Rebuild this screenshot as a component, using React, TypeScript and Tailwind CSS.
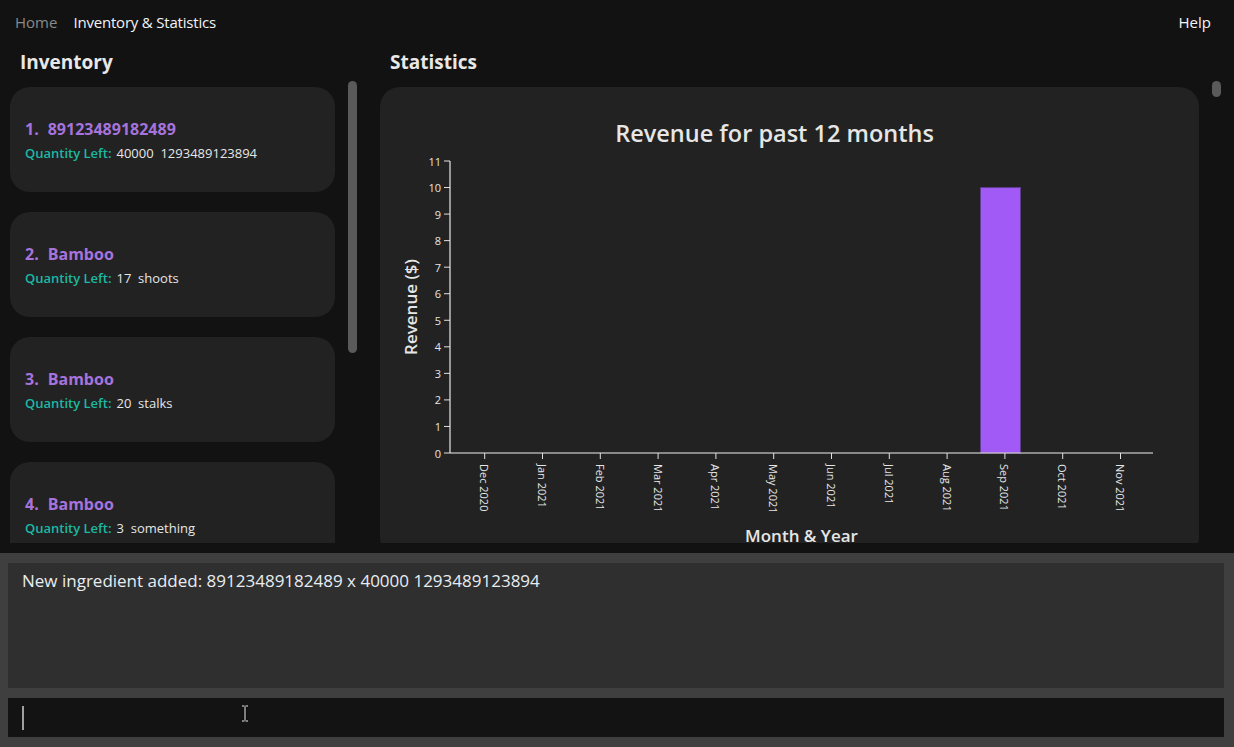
import React from "react";

const months = [
  "Dec 2020","Jan 2021","Feb 2021","Mar 2021","Apr 2021","May 2021",
  "Jun 2021","Jul 2021","Aug 2021","Sep 2021","Oct 2021","Nov 2021",
];

const items = [
  { n: 1, name: "89123489182489", qty: "40000  1293489123894" },
  { n: 2, name: "Bamboo", qty: "17  shoots" },
  { n: 3, name: "Bamboo", qty: "20  stalks" },
  { n: 4, name: "Bamboo", qty: "3  something" },
];

function Chart() {
  const x0 = 70, x1 = 773, y0 = 74, y1 = 366;
  const unit = (y1 - y0) / 11;
  const ticks = Array.from({ length: 12 }, (_, i) => i);
  return (
    <svg width="819" height="470" className="block" style={{ fontFamily: "'Open Sans', sans-serif" }}>
      <text x="394.5" y="55" textAnchor="middle" fill="#e6e6e6" fontSize="23.5" fontWeight="600">
        Revenue for past 12 months
      </text>
      {ticks.map((v) => {
        const y = y1 - v * unit;
        return (
          <g key={v}>
            <line x1={x0 - 6} x2={x0} y1={y} y2={y} stroke="#e0e0e0" strokeWidth="1" />
            <text x={x0 - 9} y={y} textAnchor="end" dominantBaseline="central" fill="#e6e6e6" fontSize="11">
              {v}
            </text>
          </g>
        );
      })}
      <line x1={x0} x2={x0} y1={y0} y2={y1} stroke="#e8e8e8" strokeWidth="1.2" />
      <rect x="600.5" y={y1 - 10 * unit} width="40" height={10 * unit} fill="#a25af6" stroke="#5e3d8c" strokeWidth="1" />
      <line x1={x0} x2={x1} y1={y1} y2={y1} stroke="#f0f0f0" strokeWidth="1.2" />
      {months.map((m, i) => {
        const x = 104.7 + 57.8 * i;
        return (
          <g key={m}>
            <line x1={x} x2={x} y1={y1} y2={y1 + 6} stroke="#e0e0e0" strokeWidth="1" />
            <text
              x={x}
              y={y1 + 11}
              transform={`rotate(90 ${x} ${y1 + 11})`}
              textAnchor="start"
              dominantBaseline="central"
              fill="#e6e6e6"
              fontSize="11"
            >
              {m}
            </text>
          </g>
        );
      })}
      <text
        x="30"
        y="220"
        transform="rotate(-90 30 220)"
        textAnchor="middle"
        dominantBaseline="central"
        fill="#e6e6e6"
        fontSize="17"
        fontWeight="600"
      >
        Revenue ($)
      </text>
      <text x="421.5" y="455" textAnchor="middle" fill="#e6e6e6" fontSize="17" fontWeight="600">
        Month &amp; Year
      </text>
    </svg>
  );
}

export default function App() {
  return (
    <div
      className="w-[1234px] h-[747px] bg-[#121212] flex flex-col overflow-hidden relative"
      style={{ fontFamily: "'Open Sans', 'Noto Sans', sans-serif" }}
    >
      {/* nav */}
      <div className="h-[44px] flex items-center pl-[15px] pr-[23px] text-[15px] shrink-0">
        <span className="text-[#8a8a8a]">Home</span>
        <span className="ml-[16px] text-[#f2f4f7] tracking-[-0.2px]">Inventory &amp; Statistics</span>
        <span className="ml-auto text-[#f2f4f7]">Help</span>
      </div>

      {/* main */}
      <div className="h-[499px] flex shrink-0 overflow-hidden">
        {/* left column */}
        <div className="w-[380px] flex flex-col shrink-0">
          <div className="h-[37px] flex items-center pl-[20px] text-[19px] font-bold text-[#e8e8e8]">
            Inventory
          </div>
          <div className="flex-1 flex pl-[10px] overflow-hidden">
            <div className="w-[325px] pt-[6px] flex flex-col gap-[20px] shrink-0">
              {items.map((it) => (
                <div
                  key={it.n}
                  className="h-[105px] shrink-0 rounded-[20px] bg-[#222222] flex flex-col justify-center px-[15px]"
                >
                  <div className="text-[16px] leading-[22px] font-bold text-[#a673dd]">
                    <span>{it.n}.</span>
                    <span className="ml-[9px]">{it.name}</span>
                  </div>
                  <div className="mt-[4px] text-[13px] leading-[18px]">
                    <span className="font-semibold text-[#1bb9a2]">Quantity Left:</span>
                    <span className="ml-[5px] text-[#e6e6e6] whitespace-pre">{it.qty}</span>
                  </div>
                </div>
              ))}
            </div>
            <div className="ml-[13px] w-[9px] h-[272px] rounded-full bg-[#5a5a5a] shrink-0" />
          </div>
        </div>

        {/* right column */}
        <div className="flex flex-col flex-1">
          <div className="h-[37px] flex items-center pl-[10px] text-[19px] font-bold text-[#e8e8e8]">
            Statistics
          </div>
          <div className="flex-1 flex overflow-hidden">
            <div className="mt-[6px] w-[819px] h-[470px] rounded-[20px] bg-[#222222] shrink-0 overflow-hidden">
              <Chart />
            </div>
            <div className="ml-[13px] w-[9px] h-[16px] rounded-full bg-[#5a5a5a] shrink-0" />
          </div>
        </div>
      </div>

      {/* bottom */}
      <div className="mt-[10px] flex-1 bg-[#3f3f3f] pl-[8px] pr-[10px] pt-[10px] flex flex-col">
        <div className="h-[125px] bg-[#2f2f2f] pl-[14px] pt-[6px] text-[17px] leading-[24px] text-[#e8edf2]">
          New ingredient added: 89123489182489 x 40000 1293489123894
        </div>
        <div className="mt-[10px] h-[39px] bg-[#131313] relative flex items-center pl-[14px]">
          <div className="w-[2px] h-[24px] bg-[#a0a0a0]" />
          <svg className="absolute left-[232px] top-[7px]" width="10" height="17" viewBox="0 0 10 17">
            <path d="M2 1h2.5M5.5 1H8M5 1.5v14M2 16h2.5M5.5 16H8" stroke="#000" strokeWidth="2.6" fill="none" />
            <path d="M2 1h2.5M5.5 1H8M5 1.5v14M2 16h2.5M5.5 16H8" stroke="#fff" strokeWidth="1" fill="none" />
          </svg>
        </div>
      </div>
    </div>
  );
}
